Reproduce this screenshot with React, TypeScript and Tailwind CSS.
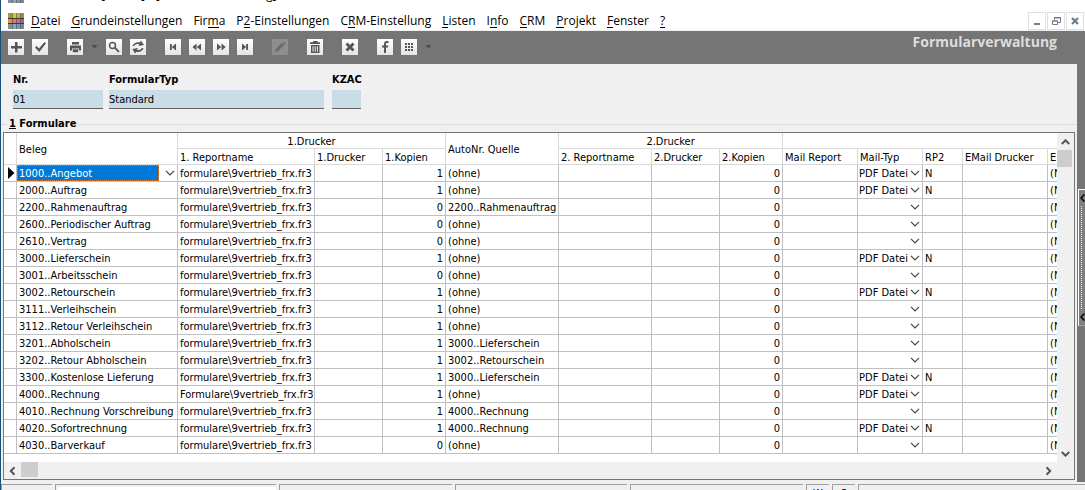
import type { ReactNode } from "react";
import clsx from "clsx";

type Row = {
  beleg: string;
  report: string;
  kopien: number;
  quelle: string;
  mailTyp?: string;
  rp2?: string;
};

const REPORT = "formulare\\9vertrieb_frx.fr3";

const ROWS: Row[] = [
  { beleg: "1000..Angebot", report: REPORT, kopien: 1, quelle: "(ohne)", mailTyp: "PDF Datei", rp2: "N" },
  { beleg: "2000..Auftrag", report: REPORT, kopien: 1, quelle: "(ohne)", mailTyp: "PDF Datei", rp2: "N" },
  { beleg: "2200..Rahmenauftrag", report: REPORT, kopien: 0, quelle: "2200..Rahmenauftrag" },
  { beleg: "2600..Periodischer Auftrag", report: REPORT, kopien: 0, quelle: "(ohne)" },
  { beleg: "2610..Vertrag", report: REPORT, kopien: 0, quelle: "(ohne)" },
  { beleg: "3000..Lieferschein", report: REPORT, kopien: 1, quelle: "(ohne)", mailTyp: "PDF Datei", rp2: "N" },
  { beleg: "3001..Arbeitsschein", report: REPORT, kopien: 0, quelle: "(ohne)" },
  { beleg: "3002..Retourschein", report: REPORT, kopien: 1, quelle: "(ohne)", mailTyp: "PDF Datei", rp2: "N" },
  { beleg: "3111..Verleihschein", report: REPORT, kopien: 1, quelle: "(ohne)" },
  { beleg: "3112..Retour Verleihschein", report: REPORT, kopien: 1, quelle: "(ohne)" },
  { beleg: "3201..Abholschein", report: REPORT, kopien: 1, quelle: "3000..Lieferschein" },
  { beleg: "3202..Retour Abholschein", report: REPORT, kopien: 1, quelle: "3002..Retourschein" },
  { beleg: "3300..Kostenlose Lieferung", report: REPORT, kopien: 1, quelle: "3000..Lieferschein", mailTyp: "PDF Datei", rp2: "N" },
  { beleg: "4000..Rechnung", report: "Formulare\\9vertrieb_frx.fr3", kopien: 1, quelle: "(ohne)", mailTyp: "PDF Datei" },
  { beleg: "4010..Rechnung Vorschreibung", report: REPORT, kopien: 1, quelle: "4000..Rechnung" },
  { beleg: "4020..Sofortrechnung", report: REPORT, kopien: 1, quelle: "4000..Rechnung", mailTyp: "PDF Datei", rp2: "N" },
  { beleg: "4030..Barverkauf", report: REPORT, kopien: 0, quelle: "(ohne)" },
];

// [before, access key, after]
const MENU = [
  ["", "D", "atei"],
  ["", "G", "rundeinstellungen"],
  ["Fir", "m", "a"],
  ["P", "2", "-Einstellungen"],
  ["C", "R", "M-Einstellung"],
  ["", "L", "isten"],
  ["I", "n", "fo"],
  ["", "C", "RM"],
  ["", "P", "rojekt"],
  ["", "F", "enster"],
  ["", "?", ""],
];

function AppLogo() {
  return (
    <svg className="size-4 shrink-0" viewBox="0 0 16 16" shapeRendering="crispEdges" aria-hidden="true">
      <rect width="16" height="16" fill="#9a9080" />
      <rect x="0" y="0" width="4" height="5" fill="#a8924a" />
      <rect x="4" y="0" width="5" height="5" fill="#c8d020" />
      <rect x="9" y="0" width="4" height="5" fill="#b8b040" />
      <rect x="13" y="0" width="3" height="5" fill="#8a9078" />
      <rect x="0" y="5" width="4" height="5" fill="#d89a30" />
      <rect x="4" y="5" width="5" height="5" fill="#d07888" />
      <rect x="9" y="5" width="4" height="5" fill="#b870b0" />
      <rect x="13" y="5" width="3" height="5" fill="#a06878" />
      <rect x="0" y="11" width="4" height="5" fill="#8090a0" />
      <rect x="4" y="11" width="5" height="5" fill="#80a8b0" />
      <rect x="9" y="11" width="4" height="5" fill="#7898b8" />
      <rect x="13" y="11" width="3" height="5" fill="#7888a0" />
      <path d="M0 5.500h16M0 10.500h16" stroke="#4a3038" />
      <path d="M4.500 0v16M8.500 0v16M12.500 0v16" stroke="#4a3c38" strokeOpacity=".55" />
    </svg>
  );
}

function ToolButton({ label, disabled, children }: { label: string; disabled?: boolean; children: ReactNode }) {
  return (
    <button
      type="button"
      aria-label={label}
      disabled={disabled}
      className={clsx(
        "size-4 shrink-0",
        disabled ? "bg-[#8e8e8e] text-[#6c6c6c]" : "bg-gradient-to-b from-white to-[#e4e4e8] text-[#555555]",
      )}
    >
      <svg className="size-4" viewBox="0 0 16 16" fill="currentColor" aria-hidden="true">
        {children}
      </svg>
    </button>
  );
}

function DropArrow({ label }: { label: string }) {
  return (
    <button type="button" aria-label={label} className="flex w-[7px] items-center text-[#4c4c4c]">
      <svg className="h-1 w-[7px]" viewBox="0 0 7 4" fill="currentColor" aria-hidden="true">
        <path d="M.5 0h6l-3 3.500z" />
      </svg>
    </button>
  );
}

function Toolbar() {
  return (
    <div className="flex h-[33px] shrink-0 items-start justify-between bg-[#757575] pl-[7px] pr-7">
      <div role="toolbar" aria-label="Werkzeuge" className="flex items-center gap-[19px] pt-2">
        <div className="flex gap-2">
          <ToolButton label="Neu">
            <path d="M7 3h2.500v4H14v2.500H9.500v4H7v-4H3V7h4z" />
          </ToolButton>
          <ToolButton label="Speichern">
            <path d="M3 8.500l1.500-1.500 2.500 2.500L12.500 3 14 4.300 7.300 13z" />
          </ToolButton>
        </div>
        <div className="flex items-center gap-2">
          <ToolButton label="Drucken">
            <path d="M5 3h7v2.500H5zM3 6.500h11v5h-2v-2H5v2H3zM5.800 10.300h5.400v3H5.800z" />
          </ToolButton>
          <DropArrow label="Druckoptionen" />
          <ToolButton label="Suchen">
            <circle cx="6.500" cy="6.500" r="3" fill="none" stroke="currentColor" strokeWidth="1.500" />
            <path d="M8.300 9.500l1.300-1.300 4 4-1.400 1.400z" />
          </ToolButton>
          <ToolButton label="Aktualisieren">
            <path d="M2.500 7C3.500 3.500 7.500 2.500 10 3.500L11 1.500 14 6 8.500 7 9.300 5.200C7 4.500 4.800 5.200 4.200 7z" />
            <path d="M13.500 9C12.500 12.500 9 13.800 6.200 12.700L5 14.500 2.500 10 8 9 7 10.900C9 11.500 11.200 10.800 11.800 9z" />
          </ToolButton>
        </div>
        <div className="flex gap-2">
          <ToolButton label="Erster Datensatz">
            <path d="M5 5h1.800v6H5zM6.800 8L11 4.500v7z" />
          </ToolButton>
          <ToolButton label="Zurück">
            <path d="M3.500 8l4-3.500v7zM7.800 8L12 4.500v7z" />
          </ToolButton>
          <ToolButton label="Vor">
            <path d="M4 4.500L8.200 8 4 11.500zM8.500 4.500L12.700 8l-4.200 3.500z" />
          </ToolButton>
          <ToolButton label="Letzter Datensatz">
            <path d="M5 4.500L9.200 8 5 11.500zM9.200 5H11v6H9.200z" />
          </ToolButton>
        </div>
        <ToolButton label="Bearbeiten" disabled>
          <path d="M3 13l.8-3L10 3.800l2.300 2.300L6 12.300zM10.700 3l1-.8 2.200 2.200-.9 1z" />
        </ToolButton>
        <ToolButton label="Löschen">
          <path d="M6 2h4.500v1.300H13V5H3V3.300h3zM4 6h8.500v8H4zm1.500 1.200v5.500h1V7.200zm2.200 0v5.500h1V7.200zm2.200 0v5.500h1V7.200z" fillRule="evenodd" />
        </ToolButton>
        <ToolButton label="Abbrechen">
          <path d="M3.500 5.500l2-2L8 6l2.500-2.500 2 2L10 8l2.500 2.500-2 2L8 10l-2.500 2.500-2-2L6 8z" />
        </ToolButton>
        <div className="flex items-center gap-2">
          <ToolButton label="Facebook">
            <path d="M7 14V8.500H5V6.500h2V5c0-2 1-3 3-3h1.500v2H10c-.7 0-1 .3-1 1v1.500h2.300l-.3 2H9V14z" />
          </ToolButton>
          <ToolButton label="Module">
            <path d="M4 4h2v2H4zM7 4h2v2H7zM10 4h2v2h-2zM4 7h2v2H4zM7 7h2v2H7zM10 7h2v2h-2zM4 10h2v2H4zM7 10h2v2H7zM10 10h2v2h-2z" />
          </ToolButton>
          <DropArrow label="Weitere Module" />
        </div>
      </div>
      <h1 className="pt-px text-sm leading-5 font-bold text-[#dddddd]">Formularverwaltung</h1>
    </div>
  );
}

function WindowButton({ label, children }: { label: string; children: ReactNode }) {
  return (
    <button
      type="button"
      aria-label={label}
      className="flex size-[18px] items-center justify-center border border-[#e0e0e0] text-[#6f7c8a]"
    >
      <svg className="size-4 shrink-0" viewBox="0 0 16 16" fill="none" stroke="currentColor" aria-hidden="true">
        {children}
      </svg>
    </button>
  );
}

function TitleBar() {
  return (
    <header className="shrink-0 border-b border-[#f0f0f0] bg-white font-['Open_Sans','Noto_Sans',sans-serif] text-xs text-black">
      <div className="flex h-3 items-end gap-[77px] overflow-hidden pb-[9px] pl-[7px] leading-4">
        <AppLogo />
        <span className="whitespace-nowrap">[Admin] - [Formularverwaltung]</span>
      </div>
      <div className="flex h-[18px] items-center justify-between pl-[7px] pr-px">
        <nav className="flex items-center gap-[7px]" aria-label="Hauptmenü">
          <AppLogo />
          <ul className="flex gap-[11px]">
            {MENU.map(([before, key, after]) => (
              <li key={before + key + after} className="leading-4 whitespace-nowrap">
                <a href="#">
                  {before}
                  <span className="inline-block border-b border-black leading-3">{key}</span>
                  {after}
                </a>
              </li>
            ))}
          </ul>
        </nav>
        <div className="flex gap-px">
          <WindowButton label="Minimieren">
            <path d="M5 11h6" strokeWidth="2" />
          </WindowButton>
          <WindowButton label="Wiederherstellen">
            <path d="M6.500 7V4.500h6v5H10M6 5h7M4.500 8h5v3.500h-5zM4 8h6" />
          </WindowButton>
          <WindowButton label="Schließen">
            <path d="M5 5l6 6M11 5l-6 6" strokeWidth="2.200" />
          </WindowButton>
        </div>
      </div>
    </header>
  );
}

function Field({ id, label, value, className }: { id: string; label: string; value: string; className: string }) {
  return (
    <div className={className}>
      <label htmlFor={id} className="block leading-4 font-bold">
        {label}
      </label>
      <input
        id={id}
        defaultValue={value}
        className="mt-0.5 block h-[19px] w-full border-b border-[#606060] bg-[#c9dde7] outline-none"
      />
    </div>
  );
}

function Chevron() {
  return (
    <svg className="h-[6px] w-[10px] shrink-0" viewBox="0 0 10 6" fill="none" stroke="currentColor" strokeWidth="1.200" aria-hidden="true">
      <path d="M1 .8l4 4 4-4" />
    </svg>
  );
}

function CellSelect({ label, value, selected }: { label: string; value: string; selected?: boolean }) {
  return (
    <div className="flex h-4 items-center justify-between pr-0.5 text-[#444444]">
      <select
        aria-label={label}
        defaultValue={value}
        className={clsx(
          "h-4 min-w-0 flex-1 appearance-none pt-px pl-px outline-none",
          selected
            ? "mr-1.5 border border-dotted border-[#e08030] bg-[#0078d7] leading-[13px] text-white"
            : "leading-[15px] text-black",
        )}
      >
        <option value={value}>{value}</option>
      </select>
      <Chevron />
    </div>
  );
}

const HEAD = "overflow-hidden border-r border-b border-[#d9d9d9] p-0 pt-0.5 leading-[13px] font-normal whitespace-nowrap";
const HEAD_LEFT = `${HEAD} pl-0.5 text-left`;
const CELL_BASE = "overflow-hidden border-r border-b border-[#c0c0c0] p-0 whitespace-nowrap";
const CELL = `${CELL_BASE} pt-px pl-0.5`;
const NUM = `${CELL_BASE} pt-px pr-0.5 text-right`;

function FormularGrid() {
  return (
    <table className="w-[1100px] table-fixed border-separate border-spacing-0 leading-[15px]">
      <colgroup>
        <col className="w-[13px]" />
        <col className="w-[161px]" />
        <col className="w-[137px]" />
        <col className="w-[68px]" />
        <col className="w-[63px]" />
        <col className="w-[113px]" />
        <col className="w-[93px]" />
        <col className="w-[68px]" />
        <col className="w-[63px]" />
        <col className="w-[75px]" />
        <col className="w-[65px]" />
        <col className="w-[40px]" />
        <col className="w-[85px]" />
        <col />
      </colgroup>
      <thead>
        <tr className="h-4">
          <td rowSpan={2} className={HEAD} />
          <th rowSpan={2} className={HEAD_LEFT}>Beleg</th>
          <th colSpan={3} className={HEAD}>1.Drucker</th>
          <th rowSpan={2} className={HEAD_LEFT}>AutoNr. Quelle</th>
          <th colSpan={3} className={HEAD}>2.Drucker</th>
          <td colSpan={5} className={HEAD} />
        </tr>
        <tr className="h-4">
          <th className={HEAD_LEFT}>1. Reportname</th>
          <th className={HEAD_LEFT}>1.Drucker</th>
          <th className={HEAD_LEFT}>1.Kopien</th>
          <th className={HEAD_LEFT}>2. Reportname</th>
          <th className={HEAD_LEFT}>2.Drucker</th>
          <th className={HEAD_LEFT}>2.Kopien</th>
          <th className={HEAD_LEFT}>Mail Report</th>
          <th className={HEAD_LEFT}>Mail-Typ</th>
          <th className={HEAD_LEFT}>RP2</th>
          <th className={HEAD_LEFT}>EMail Drucker</th>
          <th className={HEAD_LEFT}>E</th>
        </tr>
      </thead>
      <tbody>
        {ROWS.map((row, i) => (
          <tr key={row.beleg} className="h-[17px]">
            <td className={clsx(CELL_BASE, "pl-1")}>
              {i === 0 && (
                <svg className="h-3 w-[7px]" viewBox="0 0 7 12" aria-hidden="true">
                  <path d="M0 0l6.500 6L0 12z" />
                </svg>
              )}
            </td>
            {i === 0 ? (
              <td className={CELL_BASE}>
                <CellSelect label="Beleg" value={row.beleg} selected />
              </td>
            ) : (
              <td className={CELL}>{row.beleg}</td>
            )}
            <td className={CELL}>{row.report}</td>
            <td className={CELL} />
            <td className={NUM}>{row.kopien}</td>
            <td className={CELL}>{row.quelle}</td>
            <td className={CELL} />
            <td className={CELL} />
            <td className={NUM}>0</td>
            <td className={CELL} />
            <td className={CELL_BASE}>
              <CellSelect label={`Mail-Typ ${row.beleg}`} value={row.mailTyp ?? ""} />
            </td>
            <td className={CELL}>{row.rp2}</td>
            <td className={CELL} />
            <td className={CELL}>(N</td>
          </tr>
        ))}
      </tbody>
    </table>
  );
}

function ScrollArrow({ label, className }: { label: string; className?: string }) {
  return (
    <button type="button" aria-label={label} className="flex size-[17px] shrink-0 items-center justify-center text-[#555555]">
      <svg className={clsx("h-[6px] w-[9px]", className)} viewBox="0 0 9 6" fill="none" stroke="currentColor" strokeWidth="2" aria-hidden="true">
        <path d="M.8 5l3.700-3.700L8.200 5" />
      </svg>
    </button>
  );
}

function SplitterArrow() {
  return (
    <svg className="h-2 w-[5px]" viewBox="0 0 5 8" fill="none" stroke="black" strokeWidth="1.500" aria-hidden="true">
      <path d="M4.500.5L1 4l3.500 3.500" />
    </svg>
  );
}

function Splitter() {
  return (
    <div className="w-2 shrink-0 bg-[#757575] pl-px">
      <button
        type="button"
        aria-label="Seitenleiste einblenden"
        className="mt-[125px] flex h-[137px] w-full flex-col items-center justify-between border-t border-b border-l border-t-white border-b-[#a0a0a0] border-l-white bg-[#808080] py-1"
      >
        <SplitterArrow />
        <span className="my-1 w-[3px] flex-1 border-r border-l border-dotted border-r-[#3f8fd0] border-l-white" />
        <SplitterArrow />
      </button>
    </div>
  );
}

const PANEL = "h-5 border-t border-l border-[#a0a0a0]";

function StatusBar() {
  return (
    <footer className="flex h-2 shrink-0 gap-[3px] overflow-hidden pt-0.5 leading-[18px]">
      <div className={clsx(PANEL, "w-[51px]")} />
      <div className={clsx(PANEL, "w-[221px] pt-0.5 pl-0.5")}>
        <div className="h-4 bg-white" />
      </div>
      <div className={clsx(PANEL, "w-[173px]")} />
      <div className={clsx(PANEL, "w-[172px]")} />
      <div className={clsx(PANEL, "w-[173px]")} />
      <div className={clsx(PANEL, "w-[23px] text-center")}>W</div>
      <div className={clsx(PANEL, "w-[23px] text-center")}>S</div>
      <div className={clsx(PANEL, "flex-1")} />
    </footer>
  );
}

export default function App() {
  return (
    <div className="flex h-screen flex-col overflow-hidden border-l border-[#1a5075] bg-[#f0f0f0] font-['DejaVu_Sans_Condensed','DejaVu_Sans',sans-serif] text-[11px] text-black">
      <TitleBar />
      <div className="shrink-0 font-['Open_Sans','Noto_Sans',sans-serif]">
        <Toolbar />
      </div>
      <div className="flex min-h-0 flex-1">
        <main className="flex min-w-0 flex-1 flex-col pb-0.5">
          <form className="flex pt-2 pl-3">
            <Field id="nr" label="Nr." value="01" className="w-[90px]" />
            <Field id="typ" label="FormularTyp" value="Standard" className="ml-[6px] w-[215px]" />
            <Field id="kzac" label="KZAC" value="" className="ml-2 w-[29px]" />
          </form>
          <fieldset className="mt-[7px] flex min-h-0 min-w-0 flex-1 flex-col border-t border-[#dcdcdc] pr-0.5 pl-0.5">
            <legend className="ml-1 px-0.5 leading-4 font-bold">
              <span className="underline">1</span> Formulare
            </legend>
            <div className="flex min-h-0 flex-1 flex-col border border-[#757575] bg-white">
              <div className="flex min-h-0 flex-1">
                <div className="min-w-0 flex-1 overflow-hidden">
                  <FormularGrid />
                </div>
                <div className="flex w-[17px] shrink-0 flex-col bg-[#f0f0f0]">
                  <ScrollArrow label="Nach oben" />
                  <div className="flex-1">
                    <div className="h-[17px] w-[15px] bg-[#cdcdcd]" />
                  </div>
                  <ScrollArrow label="Nach unten" className="rotate-180" />
                </div>
              </div>
              <div className="flex h-[17px] shrink-0 bg-[#f0f0f0] pr-[17px]">
                <ScrollArrow label="Nach links" className="-rotate-90" />
                <div className="flex-1">
                  <div className="h-[15px] w-[17px] bg-[#cdcdcd]" />
                </div>
                <ScrollArrow label="Nach rechts" className="rotate-90" />
              </div>
            </div>
          </fieldset>
        </main>
        <Splitter />
      </div>
      <StatusBar />
    </div>
  );
}
